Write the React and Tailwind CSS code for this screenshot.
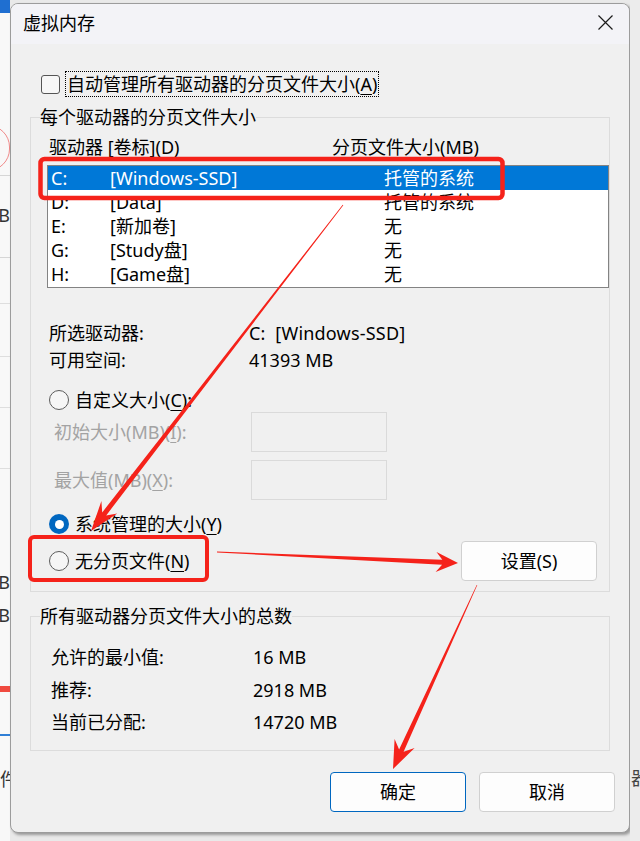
import React from "react";

const RED = "#f5221a";

function arrowPoints(x1, y1, x2, y2, w1, w2, hl, hw) {
  const dx = x2 - x1;
  const dy = y2 - y1;
  const len = Math.hypot(dx, dy);
  const ux = dx / len;
  const uy = dy / len;
  const px = -uy;
  const py = ux;
  const bx = x2 - ux * hl;
  const by = y2 - uy * hl;
  const nx = x2 - ux * hl * 0.72;
  const ny = y2 - uy * hl * 0.72;
  const pts = [
    [x1 + (px * w1) / 2, y1 + (py * w1) / 2],
    [nx + (px * w2) / 2, ny + (py * w2) / 2],
    [bx + px * hw, by + py * hw],
    [x2, y2],
    [bx - px * hw, by - py * hw],
    [nx - (px * w2) / 2, ny - (py * w2) / 2],
    [x1 - (px * w1) / 2, y1 - (py * w1) / 2],
  ];
  return pts.map((p) => p.map((v) => v.toFixed(1)).join(",")).join(" ");
}

function U({ children }) {
  return <span className="underline underline-offset-[3px] decoration-1">{children}</span>;
}

function Radio({ checked }) {
  return checked ? (
    <span className="flex h-[20px] w-[20px] shrink-0 items-center justify-center rounded-full bg-[#0067c0]">
      <span className="block h-[9px] w-[9px] rounded-full bg-white" />
    </span>
  ) : (
    <span className="block h-[20px] w-[20px] shrink-0 rounded-full border border-[#5c5c5c] bg-[#f6f6f6]" />
  );
}

function WinButton({ children, primary }) {
  return (
    <button
      type="button"
      className={
        primary
          ? "flex h-[40px] w-[136px] items-center justify-center rounded-[4px] border border-[#0067c0] bg-[#fdfdfd] text-black"
          : "flex h-[40px] w-[136px] items-center justify-center rounded-[4px] border border-[#d0d0d0] bg-[#fdfdfd] text-black"
      }
    >
      {children}
    </button>
  );
}

const drives = [
  { l: "C:", v: "[Windows-SSD]", s: "托管的系统", sel: true },
  { l: "D:", v: "[Data]", s: "托管的系统" },
  { l: "E:", v: "[新加卷]", s: "无" },
  { l: "G:", v: "[Study盘]", s: "无" },
  { l: "H:", v: "[Game盘]", s: "无" },
];

export default function App() {
  return (
    <div className="relative flex h-[841px] w-[640px] overflow-hidden bg-[#e9e9e9] font-['Noto_Sans','Noto_Sans_CJK_SC',sans-serif] text-[18px] leading-[24px] text-black">
      {/* window behind, left edge */}
      <div className="flex w-[10px] shrink-0 flex-col overflow-hidden bg-[#f8f8f8]">
        <div className="h-[13px] shrink-0 bg-[#1f6fd1]" />
        <div className="mt-[112px] -ml-[34px] h-[46px] w-[44px] shrink-0 rounded-full border border-[#f08a8a]" />
        <div className="mt-[4px] h-px shrink-0 bg-[#d6d6d6]" />
        <div className="mt-[27px] flex h-[24px] shrink-0 justify-end whitespace-nowrap text-[#333]">MB</div>
        <div className="mt-[30px] h-px shrink-0 bg-[#d6d6d6]" />
        <div className="mt-[45px] h-px shrink-0 bg-[#dedede]" />
        <div className="mt-[52px] h-px shrink-0 bg-[#dedede]" />
        <div className="mt-[50px] h-px shrink-0 bg-[#dedede]" />
        <div className="mt-[60px] h-px shrink-0 bg-[#dedede]" />
        <div className="mt-[101px] flex h-[24px] shrink-0 justify-end whitespace-nowrap text-[#333]">MB</div>
        <div className="mt-[9px] flex h-[24px] shrink-0 justify-end whitespace-nowrap text-[#333]">MB</div>
        <div className="mt-[59px] h-[6px] shrink-0 bg-[#f04a40]" />
        <div className="mt-[42px] h-[2px] shrink-0 bg-[#2f7fd6]" />
        <div className="mt-[31px] flex h-[24px] shrink-0 justify-start whitespace-nowrap text-[#333]">件</div>
      </div>

      {/* dialog */}
      <div className="mt-[3px] flex h-[830px] w-[620px] shrink-0 flex-col overflow-hidden rounded-[8px] border border-[#9c9c9c] bg-[#f0f0f0] shadow-[2px_2px_3px_rgba(0,0,0,0.35)]">
        <div className="flex h-[40px] shrink-0 items-center justify-between bg-[#f3f3f7] pb-[3px] pl-[12px] pr-[16px]">
          <span>虚拟内存</span>
          <svg width="15" height="15" viewBox="0 0 15 15">
            <path d="M0.5 0.5 L14.5 14.5 M14.5 0.5 L0.5 14.5" stroke="#1b1b1b" strokeWidth="1.2" />
          </svg>
        </div>

        <div className="mt-[27px] flex h-[26px] shrink-0 items-center">
          <span className="ml-[30px] block h-[19px] w-[19px] shrink-0 rounded-[3px] border border-[#555] bg-[#f7f7f7]" />
          <span className="ml-[5px] flex h-[26px] items-center border border-dotted border-black px-[1px]">
            自动管理所有驱动器的分页文件大小(<U>A</U>)
          </span>
        </div>

        <fieldset className="ml-[19px] mt-[8px] w-[580px] shrink-0 border border-[#dcdcdc] p-0 pb-[10px]">
          <legend className="ml-[9px] p-0 leading-[24px]">每个驱动器的分页文件大小</legend>
          <div className="mt-[6px] flex h-[24px]">
            <span className="ml-[18px] w-[283px]">
              驱动器 [卷标](<U>D</U>)
            </span>
            <span>分页文件大小(MB)</span>
          </div>
          <div className="ml-[16px] mt-[6px] h-[123px] w-[562px] border border-[#838383] bg-white">
            {drives.map((d) => (
              <div
                key={d.l}
                className={
                  d.sel
                    ? "flex h-[24px] items-center bg-[#0078d7] pl-[3px] text-white"
                    : "flex h-[24px] items-center pl-[3px]"
                }
              >
                <span className="w-[59px]">{d.l}</span>
                <span className="w-[274px]">{d.v}</span>
                <span>{d.s}</span>
              </div>
            ))}
          </div>

          <div className="mt-[33px] flex h-[24px]">
            <span className="ml-[18px] w-[200px]">所选驱动器:</span>
            <span className="whitespace-pre tracking-[0.2px]">C:  [Windows-SSD]</span>
          </div>
          <div className="mt-[3px] flex h-[24px]">
            <span className="ml-[18px] w-[200px]">可用空间:</span>
            <span>41393 MB</span>
          </div>

          <div className="mt-[16px] flex h-[24px] items-center">
            <span className="ml-[18px]">
              <Radio />
            </span>
            <span className="ml-[6px]">
              自定义大小(<U>C</U>):
            </span>
          </div>
          <div className="flex h-[40px] items-center">
            <span className="ml-[23px] w-[197px] text-[#a3a3a3]">
              初始大小(MB)(<U>I</U>):
            </span>
            <span className="block h-[40px] w-[136px] border border-[#dadada]" />
          </div>
          <div className="mt-[8px] flex h-[40px] items-center">
            <span className="ml-[23px] w-[197px] text-[#a3a3a3]">
              最大值(MB)(<U>X</U>):
            </span>
            <span className="block h-[40px] w-[136px] border border-[#dadada]" />
          </div>

          <div className="mt-[12px] flex h-[24px] items-center">
            <span className="ml-[18px]">
              <Radio checked />
            </span>
            <span className="ml-[6px]">
              系统管理的大小(<U>Y</U>)
            </span>
          </div>
          <div className="mt-[5px] flex h-[40px] items-center">
            <span className="ml-[18px]">
              <Radio />
            </span>
            <span className="ml-[6px]">
              无分页文件(<U>N</U>)
            </span>
            <span className="ml-auto mr-[12px]">
              <WinButton>设置(S)</WinButton>
            </span>
          </div>
        </fieldset>

        <fieldset className="ml-[19px] mt-[12px] w-[580px] shrink-0 border border-[#dcdcdc] p-0 pb-[16px]">
          <legend className="ml-[9px] p-0 leading-[24px]">所有驱动器分页文件大小的总数</legend>
          <div className="mt-[17px] flex h-[24px]">
            <span className="ml-[20px] w-[202px]">允许的最小值:</span>
            <span>16 MB</span>
          </div>
          <div className="mt-[9px] flex h-[24px]">
            <span className="ml-[20px] w-[202px]">推荐:</span>
            <span>2918 MB</span>
          </div>
          <div className="mt-[8px] flex h-[24px]">
            <span className="ml-[20px] w-[202px]">当前已分配:</span>
            <span>14720 MB</span>
          </div>
        </fieldset>

        <div className="mt-[21px] flex shrink-0 justify-end gap-[13px] pr-[14px]">
          <WinButton primary>确定</WinButton>
          <WinButton>取消</WinButton>
        </div>
      </div>

      {/* window behind, right edge */}
      <div className="flex flex-1 flex-col overflow-hidden bg-[#ececec]">
        <div className="mt-[766px] flex h-[24px] justify-start whitespace-nowrap pl-[1px] text-[#444]">器</div>
      </div>

      {/* red annotations */}
      <svg className="pointer-events-none absolute left-0 top-0" width="640" height="841">
        <rect x="40.5" y="159" width="462" height="39" rx="4" fill="none" stroke={RED} strokeWidth="4.5" />
        <rect x="30" y="537" width="177" height="43" rx="4" fill="none" stroke={RED} strokeWidth="4" />
        <polygon fill={RED} points={arrowPoints(343, 205, 91, 531, 0.8, 5, 30, 10)} />
        <polygon fill={RED} points={arrowPoints(217, 552, 458, 563, 0.8, 5, 22, 10)} />
        <polygon fill={RED} points={arrowPoints(477, 585, 393, 769, 0.6, 5, 28, 11)} />
      </svg>
    </div>
  );
}
